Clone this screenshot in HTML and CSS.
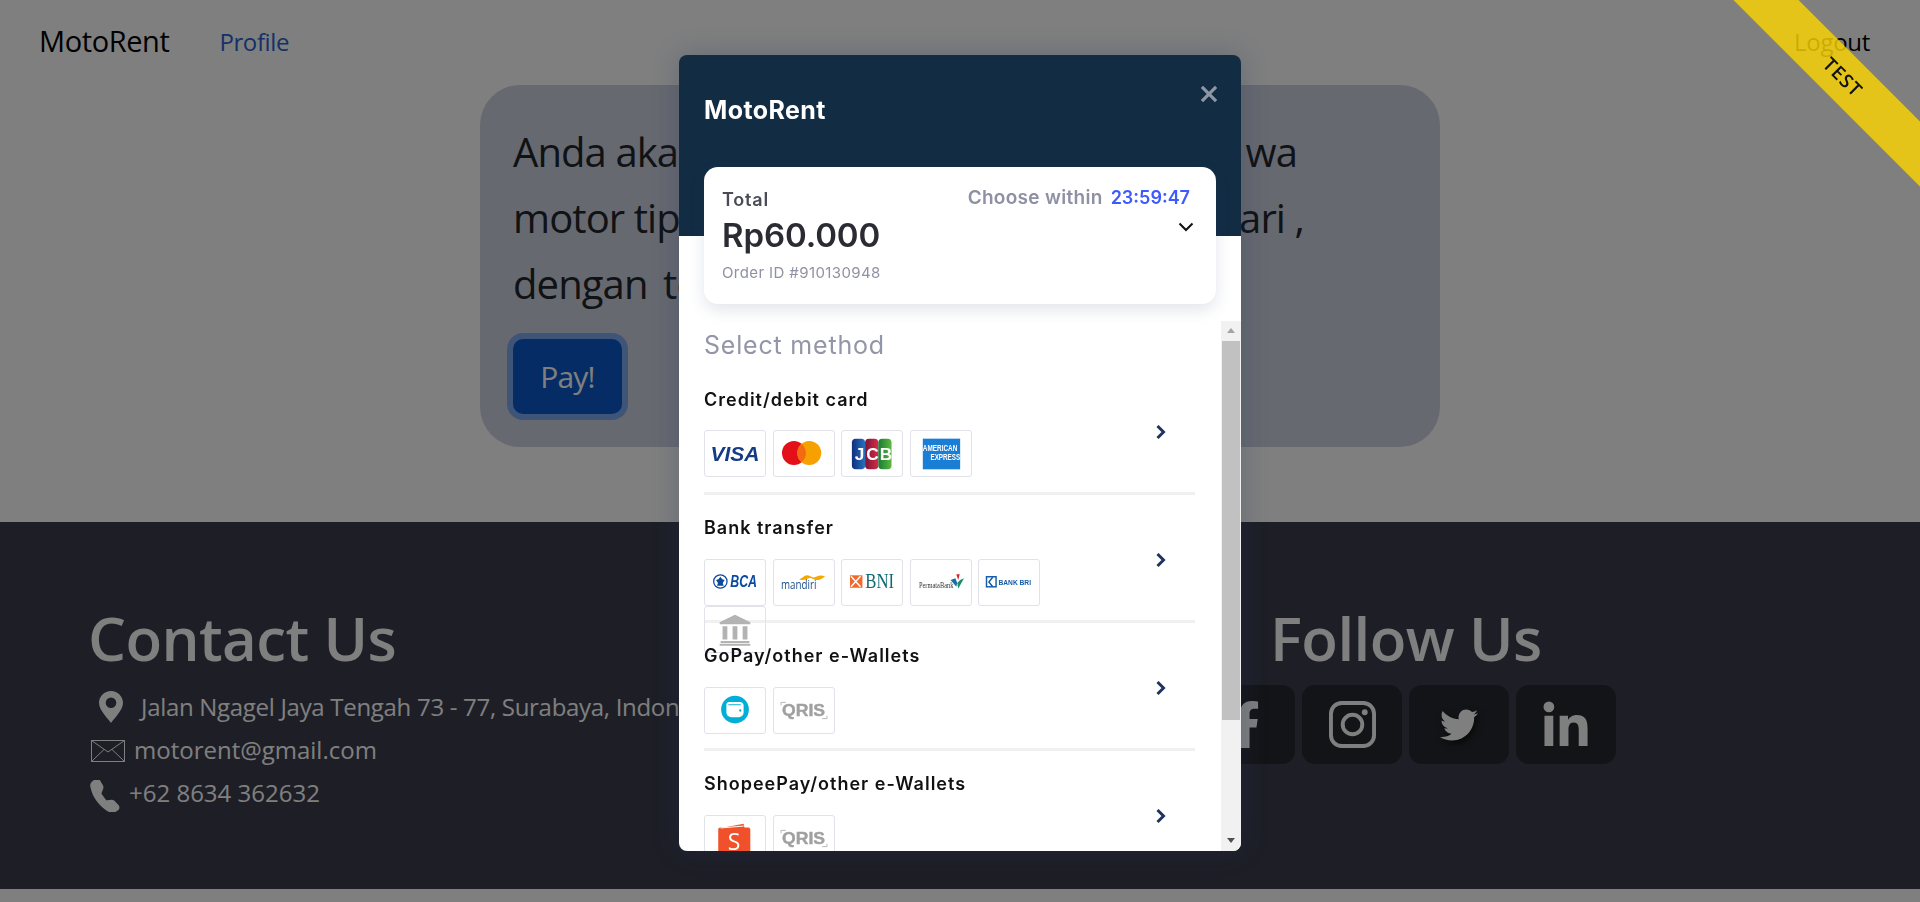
FILE: index.html

```html
<!DOCTYPE html>
<html lang="en">
<head>
  <meta charset="UTF-8" />
  <title>MotoRent</title>
  <link rel="stylesheet" href="styles.css">
</head>
<body>
  <nav class="navbar">
    <a class="brand">MotoRent</a>
    <a class="nav-link">Profile</a>
    <a class="logout">Logout</a>
  </nav>

  <main class="content">
    <section class="panel">
      <p class="line line-a"><span>Anda akan</span><span>wa</span></p>
      <p class="line line-b"><span>motor tipe</span><span>1 hari ,</span></p>
      <p class="line line-c"><span>dengan total</span></p>
      <button class="pay-btn">Pay!</button>
    </section>
  </main>

  <footer class="footer">
    <div class="contact">
      <h2>Contact Us</h2>
      <div class="contact-row row-address">
        <svg class="pin" viewBox="0 0 24 32"><path fill-rule="evenodd" d="M12 0C5.4 0 0 5.3 0 11.8 0 19.5 9.5 28.300 12 32c2.500-3.700 12-12.500 12-20.200C24 5.300 18.600 0 12 0zm0 6.500a5.300 5.300 0 1 1 0 10.600 5.300 5.300 0 0 1 0-10.600z"/></svg>
        <span>Jalan Ngagel Jaya Tengah 73 - 77, Surabaya, Indonesia</span>
      </div>
      <div class="contact-row row-mail">
        <svg class="mail" viewBox="0 0 34 22"><path fill="none" stroke-width="1" d="M.5.500h33v21H.500zM.5.500 17 12 33.500.500M.5 21.500 13 9.500M33.500 21.500 21 9.500"/></svg>
        <span>motorent@gmail.com</span>
      </div>
      <div class="contact-row row-phone">
        <svg class="phone" viewBox="0 0 16 16"><path transform="translate(16 0) scale(-1 1) rotate(-8 8 8)" d="M14.100.500a1.700 1.700 0 0 0-2.600.200L9.700 3c-.3.400-.4 1-.3 1.500l.5 2.200c.1.200 0 .5-.2.600L7.300 9.800c-.2.200-.4.200-.6.200l-2.200-.6c-.5-.1-1.100 0-1.500.3L.7 11.500c-.8.600-.9 1.900-.2 2.600l1.100 1c.7.800 1.800 1.100 2.900.7 2.600-.9 5-2.400 7-4.400s3.500-4.400 4.400-7c.4-1 0-2.100-.7-2.900L14.100.500z"/></svg>
        <span>+62 8634 362632</span>
      </div>
    </div>
    <div class="follow">
      <h2>Follow Us</h2>
      <div class="socials">
        <a class="social">
          <svg viewBox="0 0 320 512"><path d="M279 288l14-93h-89v-60c0-25 12-50 52-50h41V7s-37-7-72-7c-73 0-121 44-121 125v70H23v93h81v224h100V288z"/></svg>
        </a>
        <a class="social">
          <svg viewBox="0 0 48 48"><rect class="ig" x="2" y="2" width="44" height="44" rx="11"/><circle class="ig" cx="24" cy="24" r="10"/><circle cx="36.500" cy="11.500" r="3"/></svg>
        </a>
        <a class="social">
          <svg class="bird" viewBox="0 0 512 512"><path d="M459.370 151.716c.325 4.548.325 9.097.325 13.645 0 138.720-105.583 298.558-298.558 298.558-59.452 0-114.680-17.219-161.137-47.106 8.447.974 16.568 1.299 25.340 1.299 49.055 0 94.213-16.568 130.274-44.832-46.132-.975-84.792-31.188-98.112-72.772 6.498.974 12.995 1.624 19.818 1.624 9.421 0 18.843-1.300 27.614-3.573-48.081-9.747-84.143-51.980-84.143-102.985v-1.299c13.969 7.797 30.214 12.670 47.431 13.319-28.264-18.843-46.781-51.005-46.781-87.391 0-19.492 5.197-37.360 14.294-52.954 51.655 63.675 129.300 105.258 216.365 109.807-1.624-7.797-2.599-15.918-2.599-24.040 0-57.828 46.782-104.934 104.934-104.934 30.213 0 57.502 12.670 76.670 33.137 23.715-4.548 46.456-13.320 66.599-25.340-7.798 24.366-24.366 44.833-46.132 57.827 21.117-2.273 41.584-8.122 60.426-16.243-14.292 20.791-32.161 39.308-52.628 54.253z"/></svg>
        </a>
        <a class="social">
          <svg viewBox="0 0 48 48"><circle cx="6" cy="6" r="5.500"/><path d="M1.500 15h9v31h-9zM17 15h8.500v4.300c1.500-2.700 4.700-5 9-5 9 0 11 5.800 11 13.500V46h-9V30c0-3.800-.5-8-5-8-4.700 0-5.500 3.600-5.500 7.700V46h-9z"/></svg>
        </a>
      </div>
    </div>
  </footer>

  <div class="backdrop"></div>

  <div class="ribbon">TEST</div>

  <div class="modal">
    <div class="modal-top">
      <span class="merchant">MotoRent</span>
      <svg class="close" viewBox="0 0 14 14"><path d="M1.500 1.500l11 11M12.500 1.500l-11 11"/></svg>
    </div>

    <div class="summary">
      <div class="summary-left">
        <div class="total-label">Total</div>
        <div class="amount">Rp60.000</div>
        <div class="order-id">Order ID #910130948</div>
      </div>
      <div class="summary-right">
        <div class="timer"><span class="timer-label">Choose within</span><span class="timer-value">23:59:47</span></div>
        <svg class="toggle" viewBox="0 0 16 10"><path d="M1.500 1.500 8 8l6.500-6.500"/></svg>
      </div>
    </div>

    <div class="modal-body">
      <div class="method-list">
        <h4 class="select-title">Select method</h4>

        <div class="method">
          <div class="method-main">
            <div class="method-name">Credit/debit card</div>
            <div class="logos">
              <span class="logo"><svg viewBox="0 0 62 47"><text class="t-visa" x="31" y="31" text-anchor="middle">VISA</text></svg></span>
              <span class="logo"><svg viewBox="0 0 62 47"><circle cx="20.500" cy="23" r="12.500" fill="#e30f19"/><circle cx="36.500" cy="23" r="12.500" fill="#f7a100"/><path d="M28.500 13.400a12.500 12.500 0 0 1 0 19.200 12.500 12.500 0 0 1 0-19.200z" fill="#f26a12"/></svg></span>
              <span class="logo">
                <svg viewBox="0 0 62 47">
                  <defs>
                    <linearGradient id="jcb-a"><stop offset="0" stop-color="#0f2f7c"/><stop offset="1" stop-color="#2a6fc0"/></linearGradient>
                    <linearGradient id="jcb-b"><stop offset="0" stop-color="#7a1534"/><stop offset="1" stop-color="#d92a4a"/></linearGradient>
                    <linearGradient id="jcb-c"><stop offset="0" stop-color="#1a7a35"/><stop offset="1" stop-color="#5cb83f"/></linearGradient>
                  </defs>
                  <rect x="10" y="8" width="13.800" height="32" rx="4" fill="url(#jcb-a)"/>
                  <rect x="23.800" y="8" width="13.800" height="32" rx="4" fill="url(#jcb-b)"/>
                  <rect x="37.600" y="8" width="13.800" height="32" rx="4" fill="url(#jcb-c)"/>
                  <text class="t-jcb" x="13 25 39" y="30">JCB</text>
                </svg>
              </span>
              <span class="logo">
                <svg viewBox="0 0 62 47">
                  <rect x="12" y="8" width="39" height="32" fill="#1b7ed6"/>
                  <text class="t-amex" x="12" y="21" textLength="36" lengthAdjust="spacingAndGlyphs">AMERICAN</text>
                  <text class="t-amex" x="20" y="30" textLength="31" lengthAdjust="spacingAndGlyphs">EXPRESS</text>
                </svg>
              </span>
            </div>
          </div>
          <svg class="arrow" viewBox="0 0 12 16"><path d="M2.500 2 8.500 8l-6 6"/></svg>
        </div>

        <div class="method">
          <div class="method-main">
            <div class="method-name">Bank transfer</div>
            <div class="logos">
              <span class="logo">
                <svg viewBox="0 0 62 47">
                  <circle cx="15.700" cy="22.500" r="7" fill="none" stroke="#0a4a9e" stroke-width="1.300"/>
                  <path d="M15.700 17.500l2 2.500 2.500 1-2 3 1 3h-7l1-3-2-3 2.500-1z" fill="#0a4a9e"/>
                  <text class="t-bca" x="26" y="28" textLength="28" lengthAdjust="spacingAndGlyphs">BCA</text>
                </svg>
              </span>
              <span class="logo">
                <svg viewBox="0 0 62 47">
                  <path d="M26 20c4-1 5-4 8-4s5 3 8 2 5-3 11-1c-3 3-6 4-9 4s-5-3-8-2-6 3-10 1z" fill="#f5a800"/>
                  <text class="t-mandiri" x="7" y="30" textLength="37" lengthAdjust="spacingAndGlyphs">mandiri</text>
                </svg>
              </span>
              <span class="logo">
                <svg viewBox="0 0 62 47">
                  <rect x="8" y="16" width="13" height="13" fill="#ef6a2c"/>
                  <path d="M9 17l10 11M19 17 9 28" stroke="#fff" stroke-width="1.500"/>
                  <text class="t-bni" x="24" y="29" textLength="30" lengthAdjust="spacingAndGlyphs">BNI</text>
                </svg>
              </span>
              <span class="logo">
                <svg viewBox="0 0 62 47">
                  <path d="M47 15h3.500l-1.500 6z" fill="#d3202f"/>
                  <path d="M41 21l5-2 2 5-1 4z" fill="#1b6fa8"/>
                  <path d="M49 30l-1-6 3-3 4-2z" fill="#1b8f6a"/>
                  <text class="t-permata" x="8" y="29" textLength="36" lengthAdjust="spacingAndGlyphs">PermataBank</text>
                </svg>
              </span>
              <span class="logo">
                <svg viewBox="0 0 62 47">
                  <rect x="7.500" y="17.500" width="10" height="10.500" fill="none" stroke="#0f5ba7" stroke-width="1.500"/>
                  <path d="M14 18l-4 5 4 5" fill="none" stroke="#0f5ba7" stroke-width="1.500"/>
                  <text class="t-bri" x="20" y="26" textLength="34" lengthAdjust="spacingAndGlyphs">BANK BRI</text>
                </svg>
              </span>
              <span class="logo">
                <svg viewBox="0 0 62 47"><path d="M31 8l16 8v2H15v-2zM18 20h5v14h-5zM28.500 20h5v14h-5zM39 20h5v14h-5zM16 35.500h30v2H16zM15 38.500h32v2H15z" fill="#b3b3b3"/></svg>
              </span>
            </div>
          </div>
          <svg class="arrow" viewBox="0 0 12 16"><path d="M2.500 2 8.500 8l-6 6"/></svg>
        </div>

        <div class="method">
          <div class="method-main">
            <div class="method-name">GoPay/other e-Wallets</div>
            <div class="logos">
              <span class="logo">
                <svg viewBox="0 0 62 47">
                  <circle cx="31" cy="22.500" r="14.500" fill="#00aed6"/>
                  <path d="M25 14.500h11a4 4 0 0 1 4 4v7a5 5 0 0 1-5 5h-8a5 5 0 0 1-5-5v-8a3 3 0 0 1 3-3z" fill="#fff"/>
                  <path d="M24 17.500h13" stroke="#00aed6" stroke-width="1"/>
                  <circle cx="36.500" cy="23.500" r="1.200" fill="#00aed6"/>
                </svg>
              </span>
              <span class="logo"><svg viewBox="0 0 62 47"><path class="qr-frame" d="M7 18v-3h5M55 29v3h-5"/><text class="t-qris" x="8" y="29" textLength="45" lengthAdjust="spacingAndGlyphs">QRIS</text></svg></span>
            </div>
          </div>
          <svg class="arrow" viewBox="0 0 12 16"><path d="M2.500 2 8.500 8l-6 6"/></svg>
        </div>

        <div class="method">
          <div class="method-main">
            <div class="method-name">ShopeePay/other e-Wallets</div>
            <div class="logos">
              <span class="logo">
                <svg viewBox="0 0 62 47">
                  <path d="M14 13l26-5 1 5z" fill="#f0512b"/>
                  <rect x="13.500" y="12" width="33.500" height="35" rx="2" fill="#f0512b"/>
                  <path d="M16 12.500 40 10.500" stroke="#fff" stroke-width="1"/>
                  <text class="t-shopee" x="30" y="36" text-anchor="middle">S</text>
                </svg>
              </span>
              <span class="logo"><svg viewBox="0 0 62 47"><path class="qr-frame" d="M7 18v-3h5M55 29v3h-5"/><text class="t-qris" x="8" y="29" textLength="45" lengthAdjust="spacingAndGlyphs">QRIS</text></svg></span>
            </div>
          </div>
          <svg class="arrow" viewBox="0 0 12 16"><path d="M2.500 2 8.500 8l-6 6"/></svg>
        </div>
      </div>

      <div class="scrollbar">
        <span class="sb-arrow sb-up"></span>
        <div class="sb-track"><div class="sb-thumb"></div></div>
        <span class="sb-arrow sb-down"></span>
      </div>
    </div>
  </div>
</body>
</html>
```

FILE: styles.css

```css
html, body {
  margin: 0;
  height: 902px;
  overflow: hidden;
}
body {
  font-family: "Open Sans", "Noto Sans", sans-serif;
  background-color: #fff;
  color: #212529;
}

/* page behind the dialog */
.navbar {
  display: flex;
  align-items: center;
  height: 85px;
  padding: 0 50px 3px 39px;
  box-sizing: border-box;
}
.brand {
  font-size: 29px;
  letter-spacing: -.4px;
  color: #000;
  margin-top: -2px;
}
.nav-link {
  margin-left: 50px;
  font-size: 24px;
  letter-spacing: -.4px;
  color: #2b62d0;
}
.logout {
  margin-left: auto;
  font-size: 24px;
  letter-spacing: -.3px;
  color: #000;
}
.content {
  height: 437px;
}
.panel {
  width: 960px;
  height: 362px;
  margin: 0 auto;
  padding: 34px 33px 0;
  box-sizing: border-box;
  background-color: #cdd2e0;
  border-radius: 40px;
}
.line {
  display: flex;
  justify-content: space-between;
  margin: 0;
  height: 66px;
  line-height: 66px;
  font-size: 40px;
  letter-spacing: -.9px;
  color: #212529;
}
.line-a { width: 784px; }
.line-b { width: 791px; }
.line-c { word-spacing: 6px; }
.pay-btn {
  display: block;
  width: 109px;
  height: 75px;
  margin-top: 22px;
  background-color: #0a58ca;
  border: none;
  border-radius: 10px;
  box-shadow: 0 0 0 6px rgba(49, 132, 253, .5);
  color: #fff;
  font-family: inherit;
  font-size: 30px;
  letter-spacing: -.8px;
}
.footer {
  display: flex;
  height: 367px;
  padding: 73px 0 0 88px;
  box-sizing: border-box;
  background-color: #3a3c4c;
  color: #fff;
}
.footer h2 {
  margin: 0;
  font-size: 60px;
  line-height: 86px;
  font-weight: 600;
  letter-spacing: -.6px;
}
.contact {
  width: 1182px;
  flex: none;
  white-space: nowrap;
}
.contact-row {
  display: flex;
  align-items: center;
  height: 43px;
  font-size: 24px;
}
.contact-row svg {
  flex: none;
  fill: #fff;
}
.row-address {
  margin-top: 4px;
  padding-left: 11px;
  letter-spacing: -.3px;
}
.pin {
  width: 24px;
  height: 32px;
  margin-right: 18px;
}
.mail {
  width: 34px;
  height: 22px;
  margin: 2px 9px 0 3px;
  stroke: #fff;
  fill: none !important;
}
.phone {
  width: 32px;
  height: 32px;
  margin: 7px 8px 0 1px;
}
.socials {
  display: flex;
  gap: 7px;
  margin: 4px 0 0 -75px;
}
.social {
  display: flex;
  align-items: center;
  justify-content: center;
  width: 100px;
  height: 79px;
  background-color: #26282e;
  border-radius: 13px;
}
.social svg {
  width: 47px;
  height: 47px;
  fill: #fff;
}
.social .ig {
  fill: none;
  stroke: #fff;
  stroke-width: 4;
}
.social .bird {
  width: 38px;
  height: 38px;
  filter: drop-shadow(2px 3px 3px rgba(0, 0, 0, .6));
}

.backdrop {
  position: fixed;
  inset: 0;
  background-color: rgba(0, 0, 0, .5);
}
.ribbon {
  position: fixed;
  top: 54px;
  right: -123px;
  width: 400px;
  height: 46px;
  line-height: 46px;
  text-align: center;
  transform: rotate(45deg);
  background-color: rgba(254, 214, 0, .8);
  color: #111;
  font-size: 19px;
  font-weight: 600;
  letter-spacing: 1px;
}

/* payment dialog */
.modal {
  position: fixed;
  top: 55px;
  left: 679px;
  display: flex;
  flex-direction: column;
  width: 562px;
  height: 796px;
  background: linear-gradient(#122c44 181px, #fff 181px);
  border-radius: 8px;
  box-shadow: 0 0 30px rgba(40, 55, 90, .3);
  overflow: hidden;
  font-family: Inter, "Open Sans", sans-serif;
}
.modal-top {
  display: flex;
  justify-content: space-between;
  height: 112px;
  padding: 0 23px 0 25px;
  flex: none;
}
.merchant {
  margin-top: 40px;
  font-size: 25px;
  line-height: 30px;
  font-weight: 700;
  color: #fff;
  letter-spacing: .4px;
}
.close {
  width: 18px;
  height: 18px;
  margin-top: 30px;
  fill: none;
  stroke: #8d98a4;
  stroke-width: 2.500;
}
.summary {
  display: flex;
  justify-content: space-between;
  flex: none;
  height: 137px;
  margin: 0 25px;
  padding: 0 22px 0 18px;
  box-sizing: border-box;
  background-color: #fff;
  border-radius: 14px;
  box-shadow: 0 6px 16px rgba(60, 70, 110, .14);
}
.total-label {
  margin-top: 21px;
  font-size: 18px;
  line-height: 24px;
  font-weight: 600;
  letter-spacing: .8px;
  color: #4b4b57;
}
.amount {
  margin-top: 2px;
  font-size: 33px;
  line-height: 42px;
  font-weight: 600;
  letter-spacing: -.1px;
  color: #2b2b33;
}
.order-id {
  margin-top: 7px;
  font-size: 15px;
  line-height: 20px;
  letter-spacing: .4px;
  color: #8f92a3;
}
.summary-right {
  display: flex;
  flex-direction: column;
  align-items: flex-end;
}
.timer {
  display: flex;
  align-items: baseline;
  gap: 8px;
  margin: 19px 4px 0 0;
  font-size: 19px;
  line-height: 24px;
  font-weight: 600;
}
.timer-label {
  letter-spacing: .3px;
  color: #8e90a3;
}
.timer-value {
  font-size: 18px;
  color: #3d5afe;
}
.toggle {
  width: 16px;
  height: 10px;
  margin-top: 12px;
  fill: none;
  stroke: #111;
  stroke-width: 2;
}
.modal-body {
  display: flex;
  flex: none;
  height: 530px;
  margin-top: 17px;
}
.method-list {
  flex: 1;
  overflow: hidden;
  padding-left: 25px;
}
.select-title {
  margin: 0;
  height: 46px;
  line-height: 48px;
  font-size: 25px;
  font-weight: 400;
  letter-spacing: .8px;
  color: #9395a8;
}
.method {
  display: flex;
  justify-content: space-between;
  box-sizing: border-box;
  height: 128px;
  width: 491px;
  border-bottom: 3px solid #f0f0f0;
}
.method:last-child {
  border-bottom: none;
}
.method-main {
  width: 440px;
}
.method-name {
  height: 64px;
  padding-top: 21px;
  box-sizing: border-box;
  font-size: 18px;
  line-height: 24px;
  font-weight: 600;
  letter-spacing: 1px;
  color: #111;
}
.method:first-of-type .logos {
  margin-top: -1px;
}
.logos {
  display: flex;
  flex-wrap: wrap;
  column-gap: 6.500px;
  width: 345px;
}
.logo {
  width: 62px;
  height: 47px;
  box-sizing: border-box;
  border: 1px solid #e1e2ea;
  border-radius: 3px;
  overflow: hidden;
}
.logo svg {
  display: block;
  width: 100%;
  height: 100%;
}
.arrow {
  width: 12px;
  height: 16px;
  margin: 57px 28px 0 0;
  fill: none;
  stroke: #1f3560;
  stroke-width: 3;
}

/* logo wordmarks */
.t-visa { font: italic 700 22px "Liberation Sans", sans-serif; fill: #163a83; }
.t-jcb { font: 700 18px "Liberation Sans", sans-serif; fill: #fff; }
.t-amex { font: 700 9px "Liberation Sans", sans-serif; fill: #fff; }
.t-bca { font: italic 700 17px "Liberation Sans", sans-serif; fill: #0a4a9e; }
.t-mandiri { font: 400 13px "Open Sans", sans-serif; fill: #1b4f86; }
.t-bni { font: 400 21px "Liberation Serif", serif; fill: #0e6a78; }
.t-permata { font: 400 7.500px "Liberation Serif", serif; fill: #333; }
.t-bri { font: 700 8px "Liberation Sans", sans-serif; fill: #0f5ba7; }
.t-qris { font: 700 17px "Liberation Sans", sans-serif; fill: #a0a0a0; stroke: #a0a0a0; stroke-width: .4; }
.t-shopee { font: 400 24px "Open Sans", sans-serif; fill: #fff; }
.qr-frame { fill: none; stroke: #b5b5b5; stroke-width: 1; }

/* scrollbar of the method list */
.scrollbar {
  display: flex;
  flex-direction: column;
  flex: none;
  width: 20px;
  background-color: #f1f1f1;
}
.sb-arrow {
  position: relative;
  flex: none;
  height: 20px;
}
.sb-up::after, .sb-down::after {
  content: "";
  position: absolute;
  left: 6px;
  top: 7px;
  border-left: 4px solid transparent;
  border-right: 4px solid transparent;
}
.sb-up::after { border-bottom: 5px solid #a3a3a3; }
.sb-down::after { border-top: 5px solid #505050; }
.sb-track {
  flex: 1;
  padding: 0 1px;
}
.sb-thumb {
  height: 379px;
  background-color: #c1c1c1;
}
```
